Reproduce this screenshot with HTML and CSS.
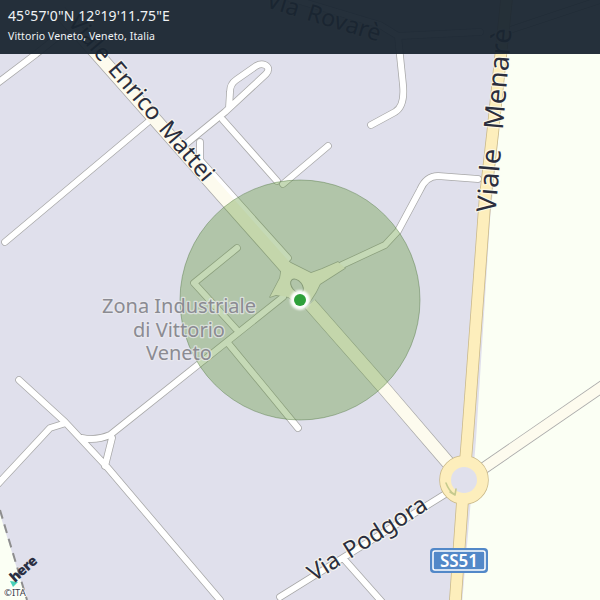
FILE: index.html
```html
<!DOCTYPE html>
<html lang="it">
<head>
<meta charset="utf-8">
<title>Vittorio Veneto</title>
<link rel="stylesheet" href="styles.css">
</head>
<body>
<main class="screen">
  <svg class="map" viewBox="0 0 600 600" width="600" height="600" aria-label="Mappa">
    <defs>
      <path id="minor" d="M5 242 L148 122 M-5 85 L36 54 L56 38 M187 143 L225 112 L266 74 Q271 68 265 65 Q261 63 256 66 L236 80 Q230 84 230 92 L229 108 M223 120 L277 181 M283 184 L328 146 M200 142 L200 160 L288 258 M342 265 L385 245 L398 231 L420 190 Q426 176 438 176 L478 179 M283 297 L110 435 Q96 441 82 438 M19 380 L65 422 L107 467 L220 600 M-3 485 L50 428 L66 423 M112 438 L105 466 M237 248 L194 283 L236 329 M228 343 L298 428 M447 493 L280 597 M343 558 L382 602 M270 -8 L380 25 L398 36 L480 32 M398 36 L403 85 Q405 106 395 112 L371 125 M510 30 L600 0"/>
      <path id="main-road" d="M60 12 L220 193 L290 272 M310 304 L383 387 L450 465"/>
      <path id="east-road" d="M484 468 L606 384"/>
      <path id="menare" d="M507 -5 L493 130 L485 200 L468 430 L464 480 L455 605"/>
      <polygon id="blob" points="283,259 291,263 311,273 322,269 338,262 345,268 320,284 316,292 309,303 304,308 288,297 276,295 270,297 280,278"/>
    </defs>
    <rect class="ground" width="600" height="600"/>
    <polygon class="pale" points="511,0 604,0 604,604 462,604 476,440 490,220 500,120"/>
    <polygon class="pale" points="-2,508 28,604 -2,604"/>
    <line class="rail" x1="0" y1="510" x2="27" y2="600"/>

    <use href="#minor" class="casing w-minor"/>
    <use href="#main-road" class="casing w-main"/>
    <use href="#east-road" class="casing w-east"/>
    <use href="#blob" class="blob-casing"/>
    <use href="#minor" class="stroke-white w-minor-in"/>
    <use href="#main-road" class="stroke-cream w-main-in"/>
    <use href="#east-road" class="stroke-cream w-east-in"/>
    <use href="#blob" class="blob-fill"/>
    <ellipse class="hole" cx="297" cy="286" rx="8" ry="5" transform="rotate(50 297 286)"/>

    <use href="#menare" class="casing-y w-menare"/>
    <circle class="ring-casing" cx="464" cy="480" r="18.5"/>
    <use href="#menare" class="stroke-yellow w-menare-in"/>
    <circle class="ring" cx="464" cy="480" r="18.5"/>
    <path class="arrow" d="M446 483 Q449 491 454 494 M450 492 L455 495 L456 489"/>

    <circle class="area" cx="300" cy="300" r="120"/>

    <circle class="halo" cx="300" cy="300" r="10"/>
    <circle class="dot" cx="300" cy="300" r="6"/>

    <text class="place" text-anchor="middle" x="179" y="313">Zona Industriale</text>
    <text class="place" text-anchor="middle" x="179" y="337">di Vittorio</text>
    <text class="place" text-anchor="middle" x="179" y="360">Veneto</text>

    <text class="street" transform="translate(67 23) rotate(49.5)">Viale Enrico Mattei</text>
    <text class="street" transform="translate(265 7) rotate(17)">Via Rovarè</text>
    <text class="street street-large" transform="translate(495.5 213) rotate(-85)">Viale Menarè</text>
    <text class="street" transform="translate(314 582) rotate(-32.5)">Via Podgora</text>

    <rect class="shield-edge" x="430" y="548" width="58" height="25" rx="4"/>
    <rect class="shield" x="433" y="551" width="52" height="19" rx="2"/>
    <text class="shield-text" text-anchor="middle" x="459" y="567">SS51</text>

    <path class="here-mark" d="M10 581 L18 582 L13 587 Z"/>
    <text class="here" transform="translate(15 583) rotate(-42)">here</text>
    <text class="copy" x="4" y="596">©ITA</text>
  </svg>
  <header class="bar">
    <div class="coords">45°57'0"N 12°19'11.75"E</div>
    <div class="locality">Vittorio Veneto, Veneto, Italia</div>
  </header>
</main>
</body>
</html>
```
FILE: styles.css
```css
html, body { margin: 0; padding: 0; background: #e0e0ec; }
.screen { position: relative; width: 600px; height: 600px; overflow: hidden; font-family: "Noto Sans", "Open Sans", sans-serif; }
.map { position: absolute; inset: 0; display: block; }
.bar { position: relative; height: 54px; box-sizing: border-box; padding: 5px 8px 0; background: rgba(25, 37, 48, .95); color: #f0f3f5; }
.coords { font-size: 14px; line-height: 22px; letter-spacing: .1px; }
.locality { font-size: 10.5px; line-height: 18px; letter-spacing: .1px; }

.ground { fill: #e0e0ec; }
.pale { fill: #fbfff4; }
.rail { stroke: #8e8e8e; stroke-width: 2; stroke-dasharray: 9 6; }
use, .arrow { fill: none; stroke-linecap: round; stroke-linejoin: round; }
.casing { stroke: #a8a8a8; }
.casing-y { stroke: #c9b888; }
.stroke-white { stroke: #fff; }
.stroke-cream { stroke: #fdfbee; }
.stroke-yellow { stroke: #fdeebc; }
.w-minor { stroke-width: 7.5; }
.w-minor-in { stroke-width: 6; }
.w-main { stroke-width: 14; stroke-linecap: butt; }
.w-main-in { stroke-width: 12.5; stroke-linecap: butt; }
.w-east { stroke-width: 12; stroke-linecap: butt; }
.w-east-in { stroke-width: 10.5; stroke-linecap: butt; }
.w-menare { stroke-width: 12.5; stroke-linecap: butt; }
.w-menare-in { stroke-width: 11; stroke-linecap: butt; }
.blob-casing { fill: #a8a8a8; stroke: #a8a8a8; stroke-width: 1.5; }
.blob-fill { fill: #fdfbee; stroke: none; }
.hole { fill: #e0e0ec; stroke: #a0a0a0; stroke-width: 1; }
.ring-casing { fill: none; stroke: #c9b888; stroke-width: 12.5; }
.ring { fill: #e0e0ec; stroke: #fdeebc; stroke-width: 11; }
.arrow { stroke: #c6ca8e; stroke-width: 1.6; }
.area { fill: rgba(90, 147, 45, .35); stroke: rgba(70, 110, 50, .4); stroke-width: 1; }
.halo { fill: rgba(255, 255, 255, .95); filter: blur(1px); }
.dot { fill: #2ea03a; }

.street, .place, .shield-text, .here, .copy { font-family: "Noto Sans", "Open Sans", sans-serif; paint-order: stroke; stroke-linejoin: round; }
.street { font-size: 23.5px; fill: #2b2e3d; stroke: rgba(253, 251, 238, .75); stroke-width: 2.5; word-spacing: 3px; }
.street-large { font-size: 27px; letter-spacing: .8px; word-spacing: 11px; }
.place { font-size: 20px; fill: #8b8b92; stroke: rgba(235, 235, 240, .7); stroke-width: 2.5; }
.shield-edge { fill: #5288c8; }
.shield { fill: #5288c8; stroke: #fff; stroke-width: 1.5; }
.shield-text { font-size: 17px; font-weight: 600; fill: #fff; }
.here { font-size: 14px; font-weight: 900; fill: #2a2f42; letter-spacing: -.5px; }
.here-mark { fill: #48d0b8; }
.copy { font-size: 9.5px; fill: #3a3f4a; stroke: #fff; stroke-width: 1.5; }
```
